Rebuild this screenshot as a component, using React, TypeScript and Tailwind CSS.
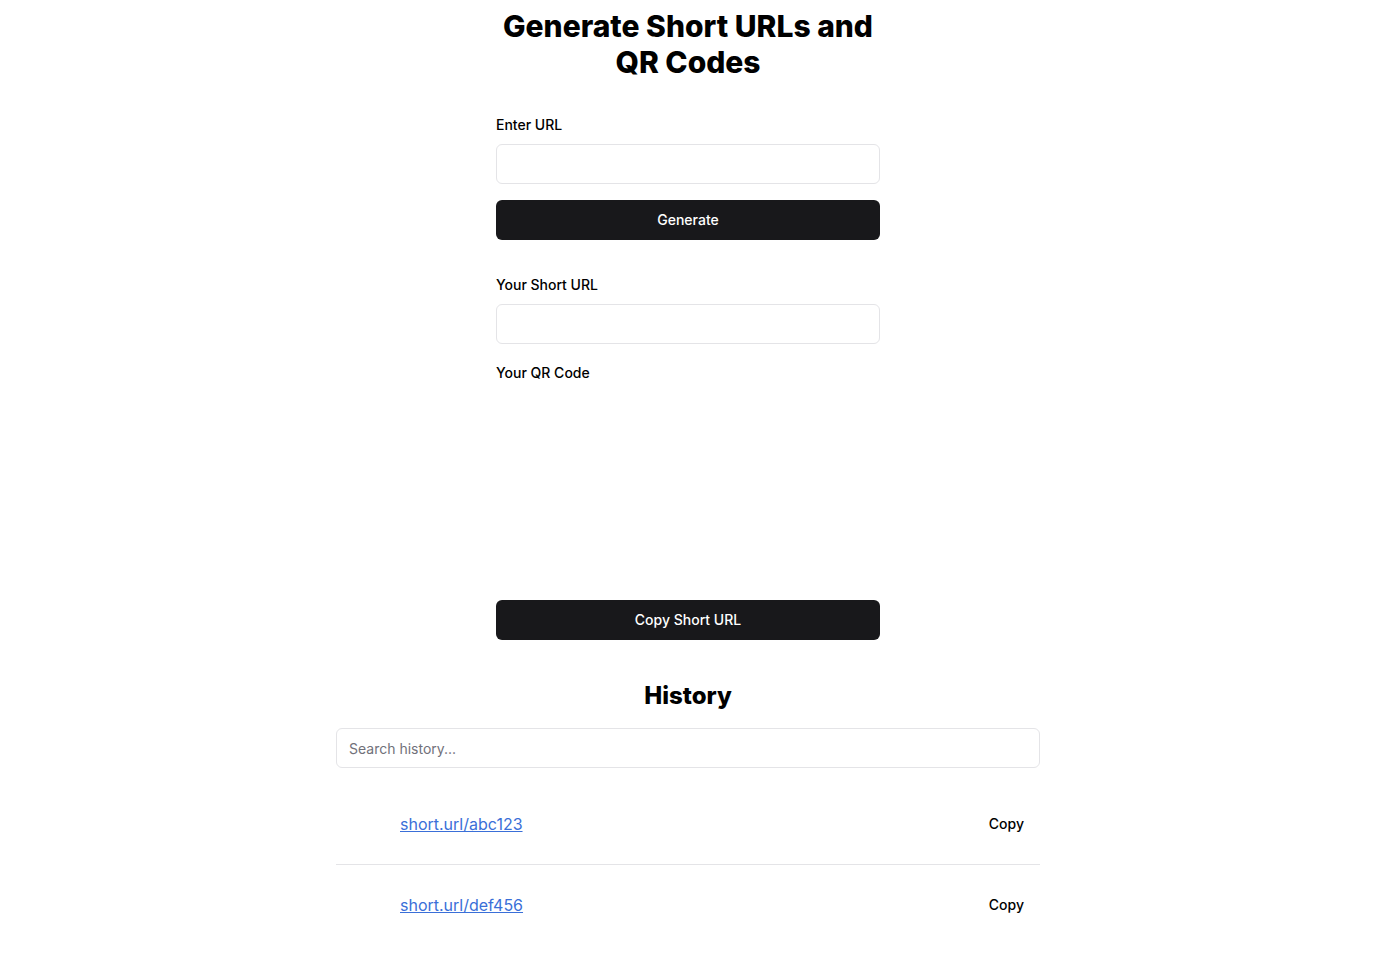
import React from 'react'

const history = [
  { id: 1, url: 'short.url/abc123' },
  { id: 2, url: 'short.url/def456' }
]

const App: React.FC = () => {
  return (
    <div className="min-h-screen bg-white text-black" style={{ fontFamily: "Inter, 'Liberation Sans', sans-serif" }}>
      <div className="mx-auto w-[384px] pt-2">
        <h1 className="text-center text-[30px] leading-9 font-extrabold">
          Generate Short URLs and QR Codes
        </h1>

        <div className="mt-[35px]">
          <label className="block text-sm leading-5 font-medium">Enter URL</label>
          <input
            type="text"
            className="mt-[9px] block h-10 w-full rounded-md border border-[#e4e4e7] px-3 text-sm outline-none"
          />
          <button className="mt-4 h-10 w-full rounded-md bg-[#18181b] text-sm font-medium text-white">
            Generate
          </button>
        </div>

        <div className="mt-[35px]">
          <label className="block text-sm leading-5 font-medium">Your Short URL</label>
          <input
            type="text"
            readOnly
            className="mt-[9px] block h-10 w-full rounded-md border border-[#e4e4e7] px-3 text-sm outline-none"
          />
        </div>

        <div className="mt-[19px]">
          <label className="block text-sm leading-5 font-medium">Your QR Code</label>
          {/* empty qr area */}
          <div className="h-[217px]" />
        </div>

        <button className="h-10 w-full rounded-md bg-[#18181b] text-sm font-medium text-white">
          Copy Short URL
        </button>
      </div>

      <div className="mx-auto mt-10 w-[704px]">
        <h2 className="text-center text-2xl leading-8 font-extrabold">History</h2>
        <input
          type="text"
          placeholder="Search history..."
          className="mt-4 block h-10 w-full rounded-md border border-[#e4e4e7] px-3 text-sm outline-none placeholder:text-[#71717a]"
        />
        <div className="mt-4">
          {history.map((item, i) => (
            <div
              key={item.id}
              className={`box-content flex h-20 items-center justify-between pl-16 pr-4 ${i < history.length - 1 ? 'border-b border-[#e4e4e7]' : ''}`}
            >
              <a href="#" className="text-base text-[#3a6fd8] underline">
                {item.url}
              </a>
              <button className="text-sm font-medium">Copy</button>
            </div>
          ))}
        </div>
      </div>
    </div>
  )
}

export default App
